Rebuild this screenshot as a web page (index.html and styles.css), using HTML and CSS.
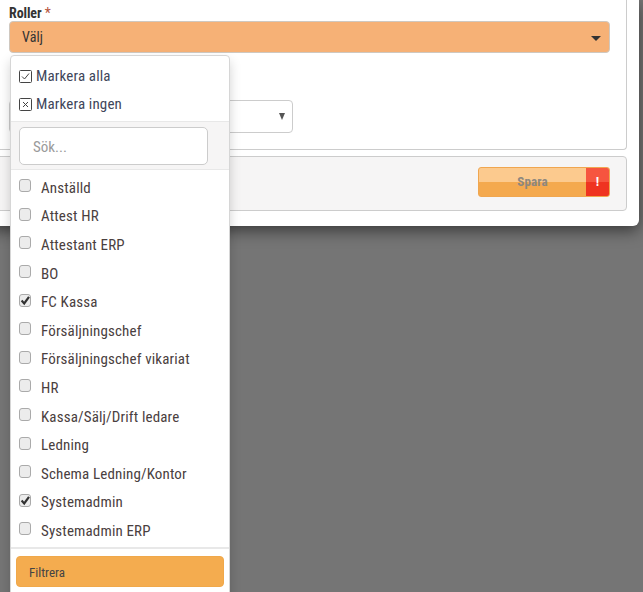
FILE: index.html
```html
<!DOCTYPE html>
<html lang="sv">
<head>
<meta charset="utf-8">
<title>Roller</title>
<link rel="stylesheet" href="styles.css">
</head>
<body>
<div class="modal">
  <div class="form-panel">
    <label class="field-label">Roller <span class="req">*</span></label>
    <div class="select-main"><span>Välj</span><i class="caret"></i></div>
    <div class="select-second"><i class="caret-small"></i></div>
  </div>
  <div class="footer-panel">
    <button class="save" type="button"><span class="save-text">Spara</span><span class="save-alert">!</span></button>
  </div>
</div>
<div class="menu">
  <div class="actions">
    <div class="action"><svg class="act-icon" viewBox="0 0 13 13"><rect x=".5" y=".5" width="12" height="12" rx="1" fill="none" stroke="#444"/><path d="M3 6.5l2.5 2.5L10 3.5" fill="none" stroke="#444"/></svg>Markera alla</div>
    <div class="action"><svg class="act-icon" viewBox="0 0 13 13"><rect x=".5" y=".5" width="12" height="12" rx="1" fill="none" stroke="#444"/><path d="M4 4l5 5M9 4l-5 5" fill="none" stroke="#444"/></svg>Markera ingen</div>
  </div>
  <div class="search"><div class="search-input">Sök...</div></div>
  <ul class="list">
    <li><span class="box"></span>Anställd</li>
    <li><span class="box"></span>Attest HR</li>
    <li><span class="box"></span>Attestant ERP</li>
    <li><span class="box"></span>BO</li>
    <li><span class="box"><svg viewBox="0 0 13 13"><path d="M2.6 6.6l2.6 2.8 4.8-6.6" fill="none" stroke="#333" stroke-width="2.2"/></svg></span>FC Kassa</li>
    <li><span class="box"></span>Försäljningschef</li>
    <li><span class="box"></span>Försäljningschef vikariat</li>
    <li><span class="box"></span>HR</li>
    <li><span class="box"></span>Kassa/Sälj/Drift ledare</li>
    <li><span class="box"></span>Ledning</li>
    <li><span class="box"></span>Schema Ledning/Kontor</li>
    <li><span class="box"><svg viewBox="0 0 13 13"><path d="M2.6 6.6l2.6 2.8 4.8-6.6" fill="none" stroke="#333" stroke-width="2.2"/></svg></span>Systemadmin</li>
    <li><span class="box"></span>Systemadmin ERP</li>
  </ul>
  <div class="menu-foot"><button class="filter" type="button">Filtrera</button></div>
</div>
</body>
</html>
```
FILE: styles.css
```css
* { box-sizing: border-box; }
html, body { margin: 0; height: 592px; overflow: hidden; }
body {
  position: relative;
  background: #757575;
  font-family: Roboto, "Liberation Sans", sans-serif;
  font-stretch: condensed;
  font-size: 14px;
  color: #333;
}
.modal {
  width: 649px;
  height: 226px;
  margin-left: -10px;
  padding-right: 3px;
  background: #fff;
  border-radius: 0 0 6px 6px;
  box-shadow: 0 5px 15px rgba(0,0,0,.5);
}
.form-panel {
  height: 150px;
  width: 637px;
  margin-bottom: 6px;
  padding: 6px 0 0 18px;
  border: 1px solid #ccc;
  border-top: 0;
  border-radius: 0 0 4px 4px;
}
.field-label {
  display: block;
  height: 15px;
  line-height: 15px;
  font-size: 14px;
  font-weight: 700;
  letter-spacing: -.1px;
}
.req { color: #b5533c; font-weight: 400; }
.select-main {
  display: flex;
  align-items: center;
  justify-content: space-between;
  width: 601px;
  height: 32px;
  padding: 0 8px 0 12px;
  background: #f6b176;
  border: 1px solid #cfc8c0;
  border-radius: 4px;
  font-size: 14px;
  letter-spacing: .1px;
}
.caret {
  width: 0;
  height: 0;
  margin-top: 3px;
  border: 5px solid transparent;
  border-top-color: #333;
  border-bottom: 0;
}
.select-second {
  display: flex;
  align-items: center;
  justify-content: flex-end;
  width: 284px;
  height: 33px;
  margin-top: 47px;
  padding-right: 7px;
  border: 1px solid #ccc;
  border-radius: 4px;
}
.caret-small {
  width: 0;
  height: 0;
  border-left: 3.5px solid transparent;
  border-right: 3.5px solid transparent;
  border-top: 7px solid #555;
}
.footer-panel {
  display: flex;
  justify-content: flex-end;
  align-items: flex-start;
  width: 637px;
  height: 55px;
  padding: 10px 16px 0 0;
  background: #f6f5f5;
  border: 1px solid #ccc;
  border-radius: 4px;
}
.save {
  display: flex;
  width: 132px;
  height: 30px;
  padding: 0;
  border: 1px solid #f0a64f;
  border-radius: 3px;
  overflow: hidden;
  font: inherit;
  font-weight: 700;
  font-size: 13px;
  letter-spacing: .1px;
  background: linear-gradient(#fcca8e 0 50%, #f4a94e 50% 100%);
}
.save-text {
  flex: 1;
  line-height: 28px;
  text-align: center;
  color: #8d877e;
}
.save-alert {
  width: 23px;
  line-height: 28px;
  text-align: center;
  color: #fff;
  font-size: 13px;
  background: linear-gradient(#f6553f 0 50%, #ef3320 50% 100%);
}
.menu {
  position: absolute;
  left: 10px;
  top: 55px;
  width: 220px;
  height: 560px;
  background: #fff;
  border: 1px solid #d6d6d6;
  border-radius: 4px;
  box-shadow: 0 6px 12px rgba(0,0,0,.175);
  color: #444;
}
.actions { height: 65px; padding-top: 6px; }
.action {
  display: flex;
  align-items: center;
  gap: 4px;
  height: 28px;
  padding-left: 8px;
  font-size: 15px;
  letter-spacing: .15px;
  color: #40465a;
}
.act-icon { width: 13px; height: 13px; flex: none; }
.search {
  height: 49px;
  padding: 5px 8px;
  background: #f6f5f5;
  border-top: 1px solid #e8e8e8;
  border-bottom: 1px solid #e8e8e8;
}
.search-input {
  width: 189px;
  height: 38px;
  line-height: 38px;
  padding-left: 13px;
  background: #fff;
  border: 1px solid #ccc;
  border-radius: 5px;
  font-size: 15px;
  color: #9a9a9a;
}
.list {
  height: 377px;
  margin: 0;
  padding: 3.5px 0 0;
  list-style: none;
}
.list li {
  display: flex;
  align-items: center;
  gap: 10px;
  height: 28.6px;
  padding-left: 8px;
  font-size: 15px;
  letter-spacing: .15px;
  color: #4a4040;
}
.box {
  flex: none;
  width: 12px;
  height: 13px;
  margin-top: -4px;
  background: #ececec;
  border: 1px solid #aaa;
  border-radius: 3px;
  overflow: hidden;
}
.box svg { display: block; width: 13px; height: 13px; margin: -1px; }
.menu-foot {
  padding: 7px 5px 0;
  border-top: 2px solid #e8e8e8;
}
.filter {
  display: block;
  width: 208px;
  height: 31px;
  padding: 1px 0 0 12px;
  text-align: left;
  background: #f4ac4f;
  border: 1px solid #f0a84a;
  border-radius: 4px;
  font: inherit;
  font-size: 13px;
  color: #444;
}
```
